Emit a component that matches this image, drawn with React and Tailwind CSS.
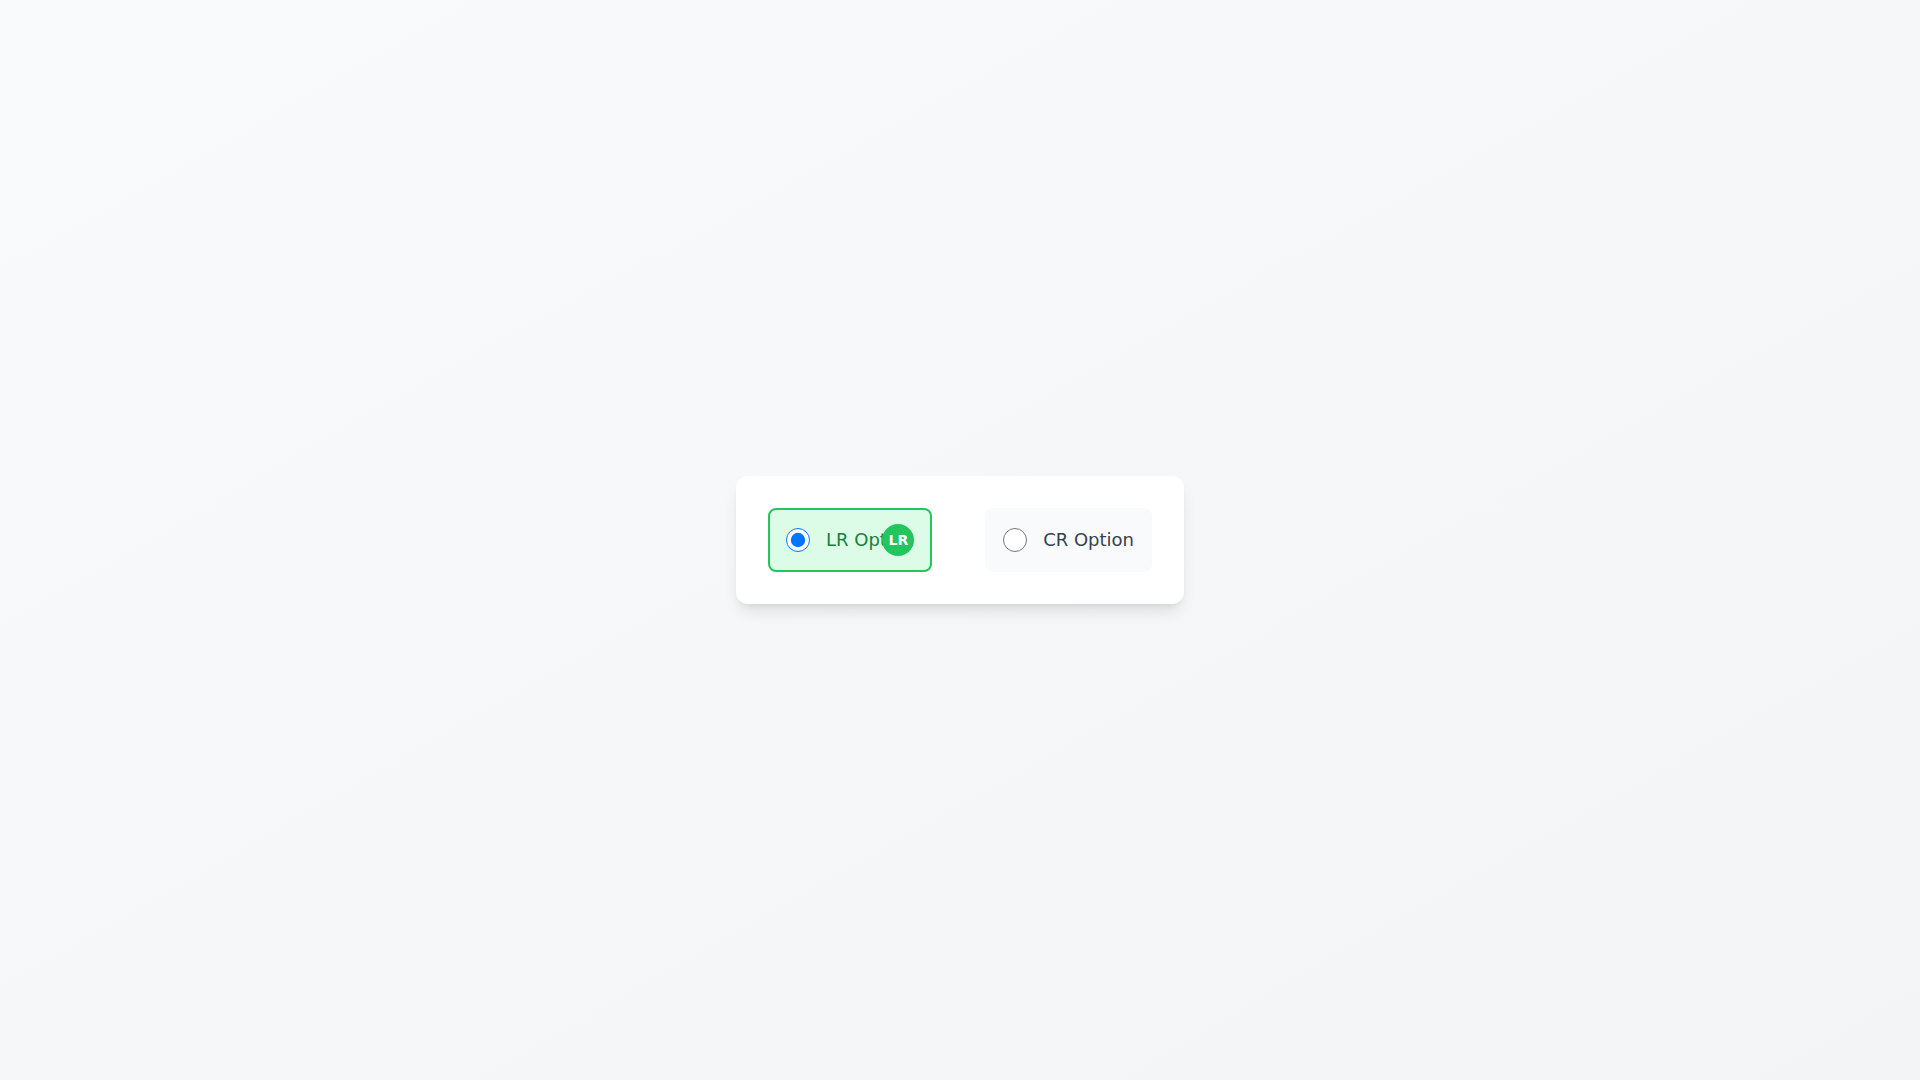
import React, { useState } from 'react'

function Option({ id, label, badge, checked, onChange }){
  return (
    <label
      htmlFor={id}
      className={
        checked
          ? 'relative flex items-center gap-4 p-4 rounded-lg border-2 border-[#22c55e] bg-[#dcfce7] text-[#15803d] cursor-pointer'
          : 'relative flex items-center gap-4 p-4 rounded-lg border-2 border-transparent bg-[#f9fafb] text-[#374151] cursor-pointer'
      }
    >
      <input id={id} type="radio" name="opt" checked={checked} onChange={onChange} className="w-6 h-6" />
      <span className="text-lg leading-7">{label}</span>
      {badge && (
        <span className="absolute right-4 top-1/2 -translate-y-1/2 w-8 h-8 rounded-full bg-[#22c55e] text-white text-sm font-bold flex items-center justify-center">
          {badge}
        </span>
      )}
    </label>
  )
}

export default function App(){
  const [value, setValue] = useState('lr')

  return (
    <div className="min-h-screen flex items-center justify-center bg-gradient-to-br from-[#f9fafb] to-[#f3f4f6]" style={{ fontFamily: '"DejaVu Sans", sans-serif' }}>
      <div className="w-full max-w-md p-8 bg-white rounded-xl shadow-lg flex items-center justify-between">
        <Option id="lr" label="LR Option" badge={value === 'lr' ? 'LR' : null} checked={value === 'lr'} onChange={()=>setValue('lr')} />
        <Option id="cr" label="CR Option" badge={value === 'cr' ? 'CR' : null} checked={value === 'cr'} onChange={()=>setValue('cr')} />
      </div>
    </div>
  )
}
